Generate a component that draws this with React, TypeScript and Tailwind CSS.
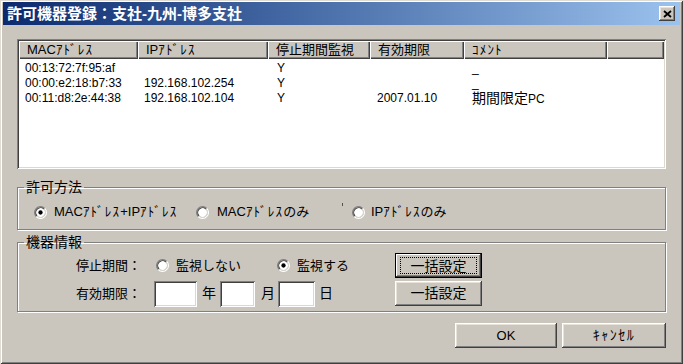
const F = "font-['Liberation_Sans','Noto_Sans_CJK_JP',sans-serif]";
const raised =
  "shadow-[inset_-1px_-1px_0_#404040,inset_1px_1px_0_#ffffff,inset_-2px_-2px_0_#808080,inset_2px_2px_0_#e6e2da]";
const sunken =
  "shadow-[inset_1px_1px_0_#808080,inset_-1px_-1px_0_#ffffff,inset_2px_2px_0_#404040,inset_-2px_-2px_0_#dcd8d0]";
const headerCell =
  "shadow-[inset_1px_1px_0_#ffffff,inset_-1px_-1px_0_#404040,inset_-2px_-2px_0_#808080]";

// half-width katakana is narrower in Noto than in the original bitmap font
const K = ({ children }: { children: string }) => (
  <span className="tracking-[1.2px]">{children}</span>
);

const Radio = ({ checked }: { checked?: boolean }) => (
  <svg width="13" height="13" viewBox="0 0 12 12" className="shrink-0">
    <circle cx="6" cy="6" r="4.5" fill="#fff" />
    <path d="M2.11 9.89A5.5 5.5 0 0 1 9.89 2.11" fill="none" stroke="#808080" />
    <path d="M9.89 2.11A5.5 5.5 0 0 1 2.11 9.89" fill="none" stroke="#ffffff" />
    <path d="M2.82 9.18A4.5 4.5 0 0 1 9.18 2.82" fill="none" stroke="#404040" />
    <path d="M9.18 2.82A4.5 4.5 0 0 1 2.82 9.18" fill="none" stroke="#d4d0c8" />
    {checked && <circle cx="6" cy="6" r="2" fill="#000" />}
  </svg>
);

const columns = [
  { label: <>MAC<K>ｱﾄﾞﾚｽ</K></>, w: "w-[119px]" },
  { label: <>IP<K>ｱﾄﾞﾚｽ</K></>, w: "w-[130px]" },
  { label: <>停止期間監視</>, w: "w-[102px]" },
  { label: <>有効期限</>, w: "w-[94px]" },
  { label: <K>ｺﾒﾝﾄ</K>, w: "w-[143px]" },
  { label: null, w: "flex-1" },
];

const rows = [
  { mac: "00:13:72:7f:95:af", ip: "", stop: "Y", date: "", note: "_" },
  { mac: "00:00:e2:18:b7:33", ip: "192.168.102.254", stop: "Y", date: "", note: "_" },
  { mac: "00:11:d8:2e:44:38", ip: "192.168.102.104", stop: "Y", date: "2007.01.10", note: "期間限定" },
];

export default function App() {
  return (
    <div
      className={`w-[683px] h-[364px] bg-[#cac6be] flex flex-col text-black ${F} shadow-[inset_1px_1px_0_#e0dcd4,inset_-1px_-1px_0_#404040,inset_2px_2px_0_#ffffff,inset_-2px_-2px_0_#808080]`}
    >
      {/* title bar */}
      <div className="mx-[3px] mt-[2px] h-[23px] flex items-center pl-[4px] pr-[5px] bg-linear-to-r from-[#0c2a6e] to-[#9cc2ee]">
        <span className="text-white font-bold text-[15px] leading-[23px]">
          許可機器登録：支社-九州-博多支社
        </span>
        <div className={`ml-auto w-[16px] h-[15px] bg-[#cac6be] flex items-center justify-center ${raised}`}>
          <svg width="9" height="8" viewBox="0 0 9 8">
            <path d="M1 1L8 7M8 1L1 7" stroke="#000" strokeWidth="1.8" />
          </svg>
        </div>
      </div>

      <div className="px-[17px] flex flex-col">
        {/* list */}
        <div className={`mt-[14px] h-[130px] bg-white p-[2px] flex flex-col ${sunken}`}>
          <div className="flex h-[18px] bg-[#cac6be] text-[13px] leading-[18px]">
            {columns.map((c, i) => (
              <div key={i} className={`${c.w} pl-[8px] whitespace-nowrap ${headerCell}`}>
                {c.label}
              </div>
            ))}
          </div>
          <div className="pt-[2px] text-[12px] leading-[15px]">
            {rows.map((r) => (
              <div key={r.mac} className="flex h-[15px]">
                <div className="w-[119px] pl-[6px]">{r.mac}</div>
                <div className="w-[130px] pl-[6px]">{r.ip}</div>
                <div className="w-[102px] pl-[9px]">{r.stop}</div>
                <div className="w-[94px] pl-[7px]">{r.date}</div>
                <div className="w-[143px] pl-[8px]">
                  {r.note === "_" ? (
                    r.note
                  ) : (
                    <>
                      <span className="text-[14px]">{r.note}</span>PC
                    </>
                  )}
                </div>
              </div>
            ))}
          </div>
        </div>

        {/* 許可方法 */}
        <fieldset className="mt-[10px] h-[51px] border border-[#808080] shadow-[inset_1px_1px_0_#ffffff,1px_1px_0_#ffffff]">
          <legend className="ml-[6px] px-[2px] text-[14px] leading-[16px]">許可方法</legend>
          <div className="flex items-center h-[16px] mt-[9px] pl-[16px] text-[13px]">
            <div className="w-[162px] flex items-center">
              <Radio checked />
              <span className="ml-[7px]">
                MAC<K>ｱﾄﾞﾚｽ</K>+IP<K>ｱﾄﾞﾚｽ</K>
              </span>
            </div>
            <div className="w-[156px] flex items-center">
              <Radio />
              <span className="ml-[8px]">
                MAC<K>ｱﾄﾞﾚｽ</K>のみ
              </span>
              <span className="ml-auto mr-[9px] mb-[16px] w-[1px] h-[3px] bg-[#505050]" />
            </div>
            <div className="flex items-center">
              <Radio />
              <span className="ml-[6px]">
                IP<K>ｱﾄﾞﾚｽ</K>のみ
              </span>
            </div>
          </div>
        </fieldset>

        {/* 機器情報 */}
        <fieldset className="mt-[4px] h-[78px] border border-[#808080] shadow-[inset_1px_1px_0_#ffffff,1px_1px_0_#ffffff]">
          <legend className="ml-[6px] px-[2px] text-[14px] leading-[16px]">機器情報</legend>
          <div className="flex items-center h-[25px] mt-[3px] ml-[58px]">
            <div className="w-[319px] flex items-center text-[13px]">
              <span className="w-[80px]">停止期間：</span>
              <div className="w-[121px] flex items-center">
                <Radio />
                <span className="ml-[7px]">監視しない</span>
              </div>
              <div className="flex items-center">
                <Radio checked />
                <span className="ml-[7px]">監視する</span>
              </div>
            </div>
            <button className="w-[87px] h-[25px] flex shadow-[inset_0_0_0_1px_#000000,inset_-2px_-2px_0_#404040,inset_2px_2px_0_#ffffff,inset_-3px_-3px_0_#808080]">
              <span className="flex-1 my-[4px] mx-[5px] border border-dotted border-black flex items-center justify-center text-[14px] leading-none">
                一括設定
              </span>
            </button>
          </div>
          <div className="flex items-center h-[27px] mt-[2px] ml-[58px]">
            <div className="w-[319px] flex items-center text-[14px]">
              <span className="w-[78px] text-[13px]">有効期限：</span>
              <div className={`w-[43px] h-[26px] bg-white ${sunken}`} />
              <span className="ml-[5px] w-[14px]">年</span>
              <div className={`ml-[4px] w-[35px] h-[26px] bg-white ${sunken}`} />
              <span className="ml-[6px] w-[14px]">月</span>
              <div className={`ml-[3px] w-[37px] h-[26px] bg-white ${sunken}`} />
              <span className="ml-[4px]">日</span>
            </div>
            <button className={`w-[87px] h-[25px] flex items-center justify-center text-[14px] ${raised}`}>
              一括設定
            </button>
          </div>
        </fieldset>

        {/* buttons */}
        <div className="flex justify-end gap-[5px] mt-[11px]">
          <button className={`w-[102px] h-[25px] flex items-center justify-center text-[13px] ${raised}`}>
            OK
          </button>
          <button className={`w-[104px] h-[25px] flex items-center justify-center text-[14px] tracking-[1.5px] ${raised}`}>
            ｷｬﾝｾﾙ
          </button>
        </div>
      </div>
    </div>
  );
}
